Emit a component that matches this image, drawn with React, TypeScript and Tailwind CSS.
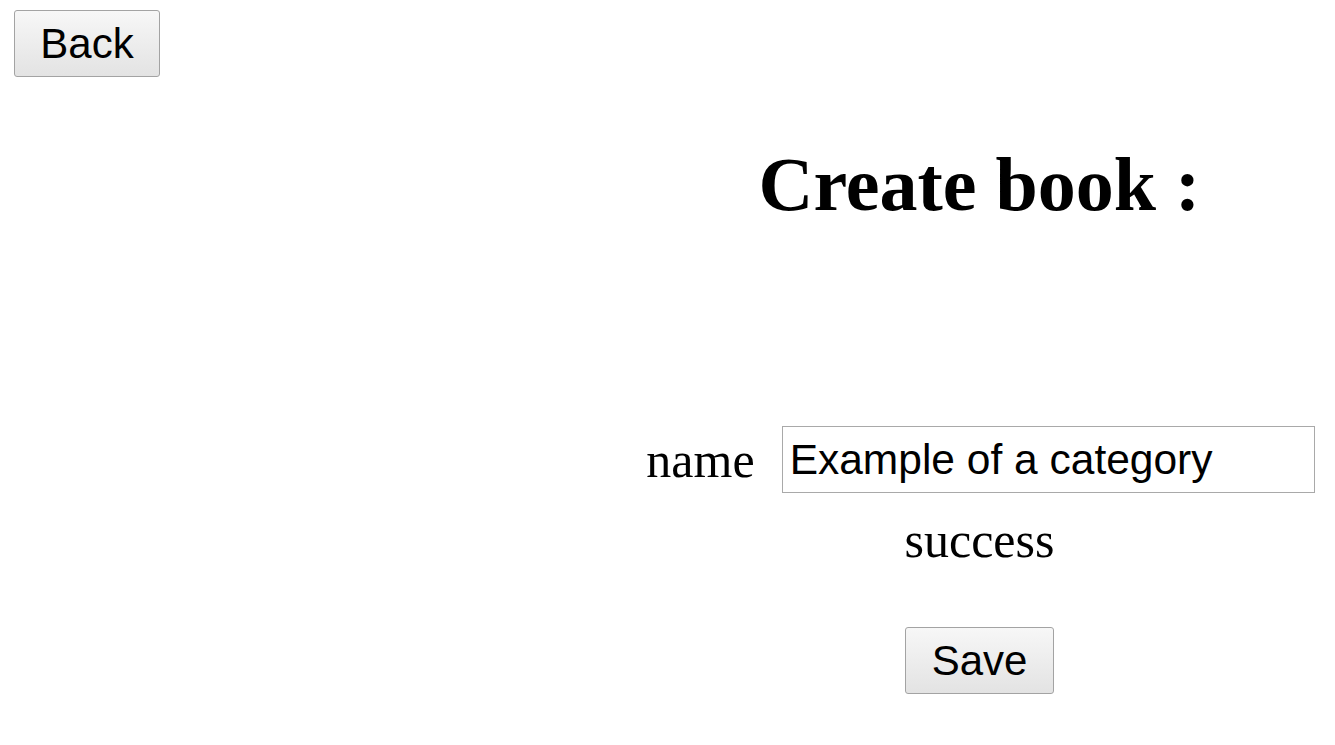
export default function App() {
  const btn =
    "h-[67px] rounded-[3px] border border-[#a3a3a3] bg-gradient-to-b from-[#f7f7f7] to-[#e3e3e3] text-[42px] leading-none text-black [font-family:'Liberation_Sans',Arial,sans-serif]";

  return (
    <div className="min-h-screen bg-white text-black">
      <div className="pl-[14px] pt-[10px]">
        <button className={`${btn} w-[146px]`}>Back</button>
      </div>

      <div className="flex flex-col items-center pl-[624px] [font-family:'Liberation_Serif','Times_New_Roman',serif]">
        <h2 className="mt-[69px] text-[76px] font-bold leading-[76px]">Create book :</h2>

        <div className="mt-[204px] flex items-center pl-[2px]">
          <label className="mr-[27px] text-[50px] leading-[50px]">name</label>
          <input
            defaultValue="Example of a category"
            className="h-[67px] w-[533px] border border-[#a9a9a9] px-[7px] text-[42.5px] text-black outline-none [font-family:'Liberation_Sans',Arial,sans-serif]"
          />
        </div>

        <p className="mt-[22px] text-[50px] leading-[50px]">success</p>

        <button className={`${btn} mt-[62px] w-[149px]`}>Save</button>
      </div>
    </div>
  );
}
